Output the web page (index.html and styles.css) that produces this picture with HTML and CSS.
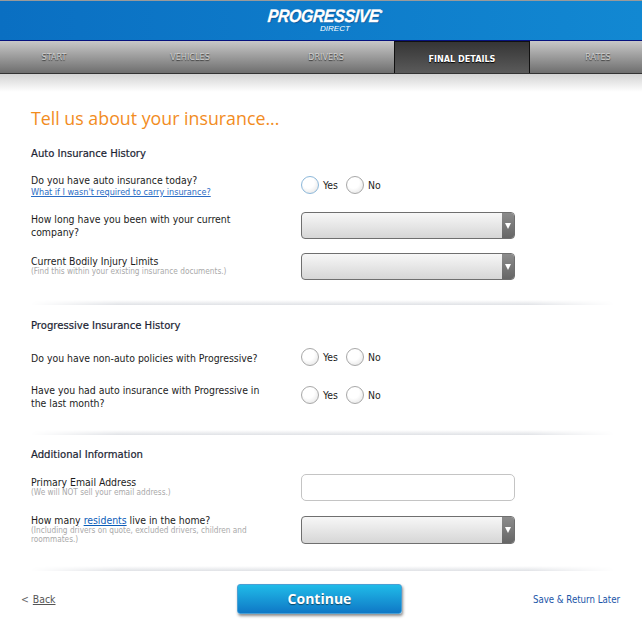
FILE: index.html
```html
<!DOCTYPE html>
<html lang="en">
<head>
<meta charset="utf-8">
<title>Progressive Direct</title>
<link rel="stylesheet" href="styles.css">
</head>
<body>
<header class="brand">
  <div class="logo">
    <div class="logo-main">PROGRESSIVE<sup class="reg">®</sup></div>
    <div class="logo-sub">DIRECT</div>
  </div>
</header>
<nav class="nav">
  <div class="nav-track">
    <div class="tab">START</div>
    <div class="tab">VEHICLES</div>
    <div class="tab">DRIVERS</div>
    <div class="tab tab-active">FINAL DETAILS</div>
    <div class="tab">RATES</div>
  </div>
</nav>
<div class="nav-shadow"></div>
<main class="page">
  <h1 class="title">Tell us about your insurance...</h1>

  <h2 class="section section-first">Auto Insurance History</h2>
  <div class="row row-a1">
    <div class="q">Do you have auto insurance today?<a class="help" href="#">What if I wasn't required to carry insurance?</a></div>
    <div class="radios radios-a1"><span class="radio radio-focus"></span><span class="opt">Yes</span><span class="radio"></span><span class="opt">No</span></div>
  </div>
  <div class="row row-a2">
    <div class="q">How long have you been with your current company?</div>
    <div class="select"><span class="arrow"></span></div>
  </div>
  <div class="row row-a3">
    <div class="q">Current Bodily Injury Limits<small class="hint">(Find this within your existing insurance documents.)</small></div>
    <div class="select"><span class="arrow"></span></div>
  </div>
  <div class="divider divider-1"></div>

  <h2 class="section">Progressive Insurance History</h2>
  <div class="row row-b1">
    <div class="q">Do you have non-auto policies with Progressive?</div>
    <div class="radios"><span class="radio"></span><span class="opt">Yes</span><span class="radio"></span><span class="opt">No</span></div>
  </div>
  <div class="row row-b2">
    <div class="q">Have you had auto insurance with Progressive in the last month?</div>
    <div class="radios radios-b2"><span class="radio"></span><span class="opt">Yes</span><span class="radio"></span><span class="opt">No</span></div>
  </div>
  <div class="divider divider-2"></div>

  <h2 class="section">Additional Information</h2>
  <div class="row row-c1">
    <div class="q">Primary Email Address<small class="hint">(We will NOT sell your email address.)</small></div>
    <div class="input"></div>
  </div>
  <div class="row row-c2">
    <div class="q">How many <a class="inline" href="#">residents</a> live in the home?<small class="hint">(Including drivers on quote, excluded drivers, children and roommates.)</small></div>
    <div class="select"><span class="arrow"></span></div>
  </div>
  <div class="divider divider-3"></div>
</main>
<footer class="actions">
  <div class="back">&lt; <a href="#">Back</a></div>
  <button class="continue" type="button">Continue</button>
  <a class="save" href="#">Save &amp; Return Later</a>
</footer>
</body>
</html>
```
FILE: styles.css
```css
* { box-sizing: border-box; }
html, body { margin: 0; padding: 0; }
body {
  width: 642px;
  height: 623px;
  overflow: hidden;
  background: #fff;
  color: #1c1c1c;
  font-family: "DejaVu Sans Condensed", "DejaVu Sans", Verdana, sans-serif;
  font-size: 10.4px;
  line-height: 13px;
}
.brand {
  height: 41px;
  border-top: 1px solid #9a9a9a;
  border-bottom: 1px solid #06127e;
  background: linear-gradient(to right, #0a6fc2, #1288d2);
  display: flex;
  justify-content: center;
}
.logo { color: #fff; text-align: center; padding-top: 7px; margin-left: 8px; }
.logo-main {
  font: italic 700 18px/17px "Liberation Sans", Arial, sans-serif;
  letter-spacing: -0.4px;
  transform: scaleX(.88) skewX(-6deg);
  -webkit-text-stroke: .3px #fff;
  text-shadow: 1px 1px 1px rgba(0, 40, 100, .45);
}
.reg { font-size: 4px; line-height: 0; vertical-align: 9px; }
.logo-sub {
  font: italic 400 8px/8px "Liberation Sans", Arial, sans-serif;
  margin: 0 0 0 20px;
}
.nav {
  height: 33px;
  overflow: hidden;
  background: linear-gradient(#c8c8c8, #6e6e6e);
  border-bottom: 1px solid #333;
}
.nav-track {
  display: grid;
  grid-template-columns: repeat(5, 136px);
  margin-left: -14px;
  width: 680px;
  height: 32px;
}
.tab {
  text-align: center;
  font: 9px/32px "DejaVu Sans Condensed", "DejaVu Sans", sans-serif;
  color: #cfcfcf;
  text-shadow: 0 1px 1px #333;
}
.tab-active {
  background: linear-gradient(#353535, #5e5e5e);
  border: 1px solid #111;
  border-bottom: 0;
  color: #fff;
  font-weight: 700;
  line-height: 34px;
  text-shadow: 0 1px 1px #000;
}
.nav-shadow { height: 18px; background: linear-gradient(#d3d3d3, #fff); }
.page { padding: 0 0 0 31px; }
.title {
  margin: 14px 0 0;
  font: 400 17.8px/24px "Open Sans", Arial, sans-serif;
  color: #f28c1e;
}
.section {
  margin: 0;
  font: 400 11.2px/14px "DejaVu Sans Condensed", "DejaVu Sans", sans-serif;
  color: #1b2433;
  -webkit-text-stroke: .2px #1b2433;
}
.section-first { margin-top: 17px; }
.row {
  display: grid;
  grid-template-columns: 270px 214px;
  align-items: start;
}
.q { width: 232px; }
.help {
  display: block;
  color: #2a6cc4;
  font-size: 9px;
  line-height: 11px;
  text-decoration: underline;
}
.hint {
  display: block;
  margin-top: -1px;
  color: #a9a9a9;
  font-size: 8.2px;
  line-height: 9px;
}
.inline { color: #0b5cb8; text-decoration: underline; }
.row-a1 { margin-top: 13px; }
.row-a2 { margin-top: 14px; }
.row-a2 .q { padding-top: 1px; }
.row-a3 { margin-top: 14px; }
.row-a3 .q { padding-top: 2px; }
.row-b1 { margin-top: 15px; }
.row-b1 .q { padding-top: 4px; }
.row-b2 { margin-top: 18px; }
.row-c1 { margin-top: 12px; }
.row-c1 .q { padding-top: 2px; }
.row-c2 { margin-top: 13px; }
.row-c2 .select { margin-top: 2px; height: 28px; }
.radios { display: flex; align-items: center; height: 18px; }
.radios-a1 { margin-top: 2px; }
.radios-b2 { margin-top: 2px; }
.radio {
  width: 18px;
  height: 18px;
  border-radius: 50%;
  border: 1px solid #a8a8a8;
  background: radial-gradient(circle at 40% 35%, #fff 40%, #dedede 100%);
}
.radio-focus { border: 1.5px solid #8db8da; }
.opt { margin: 0 7px 0 4px; width: 16px; }
.select {
  position: relative;
  height: 27px;
  border: 1px solid #6f6f6f;
  border-radius: 4px;
  background: linear-gradient(#f7f7f7, #d6d6d6);
  overflow: hidden;
}
.arrow {
  position: absolute;
  top: 0;
  right: 0;
  width: 12px;
  height: 100%;
  background: linear-gradient(#8c8c8c, #666);
}
.arrow::after {
  content: "";
  position: absolute;
  left: 3px;
  top: 10px;
  border-left: 3.5px solid transparent;
  border-right: 3.5px solid transparent;
  border-top: 6px solid #fff;
}
.input {
  height: 27px;
  border: 1px solid #c4c4c4;
  border-radius: 5px;
  background: #fff;
}
.divider {
  height: 5px;
  margin-left: -1px;
  width: 585px;
  background: linear-gradient(#fff, #e0e2e6);
  -webkit-mask-image: linear-gradient(to right, transparent, #000 15%, #000 85%, transparent);
  mask-image: linear-gradient(to right, transparent, #000 15%, #000 85%, transparent);
}
.divider-1 { margin-top: 20px; margin-bottom: 14px; }
.divider-2 { margin-top: 20px; margin-bottom: 13px; }
.divider-3 { margin-top: 22px; }
.actions {
  display: grid;
  grid-template-columns: 216px 165px 1fr;
  align-items: center;
  padding: 13px 22px 0 21px;
}
.back { color: #666; font-size: 10.4px; }
.back a { color: #555; margin-left: 1px; text-decoration: underline; }
.continue {
  height: 30px;
  padding: 0;
  border: 1px solid #4a9fd4;
  border-radius: 3px;
  background: linear-gradient(#20bbe8, #0f78c6);
  box-shadow: 1px 2px 3px rgba(0, 0, 0, .45);
  color: #fff;
  font: 700 14px/26px "Open Sans", Arial, sans-serif;
  text-shadow: 0 1px 1px rgba(0, 0, 0, .5);
}
.save {
  justify-self: end;
  color: #1a55a8;
  font-size: 9.6px;
  text-decoration: none;
}
```
